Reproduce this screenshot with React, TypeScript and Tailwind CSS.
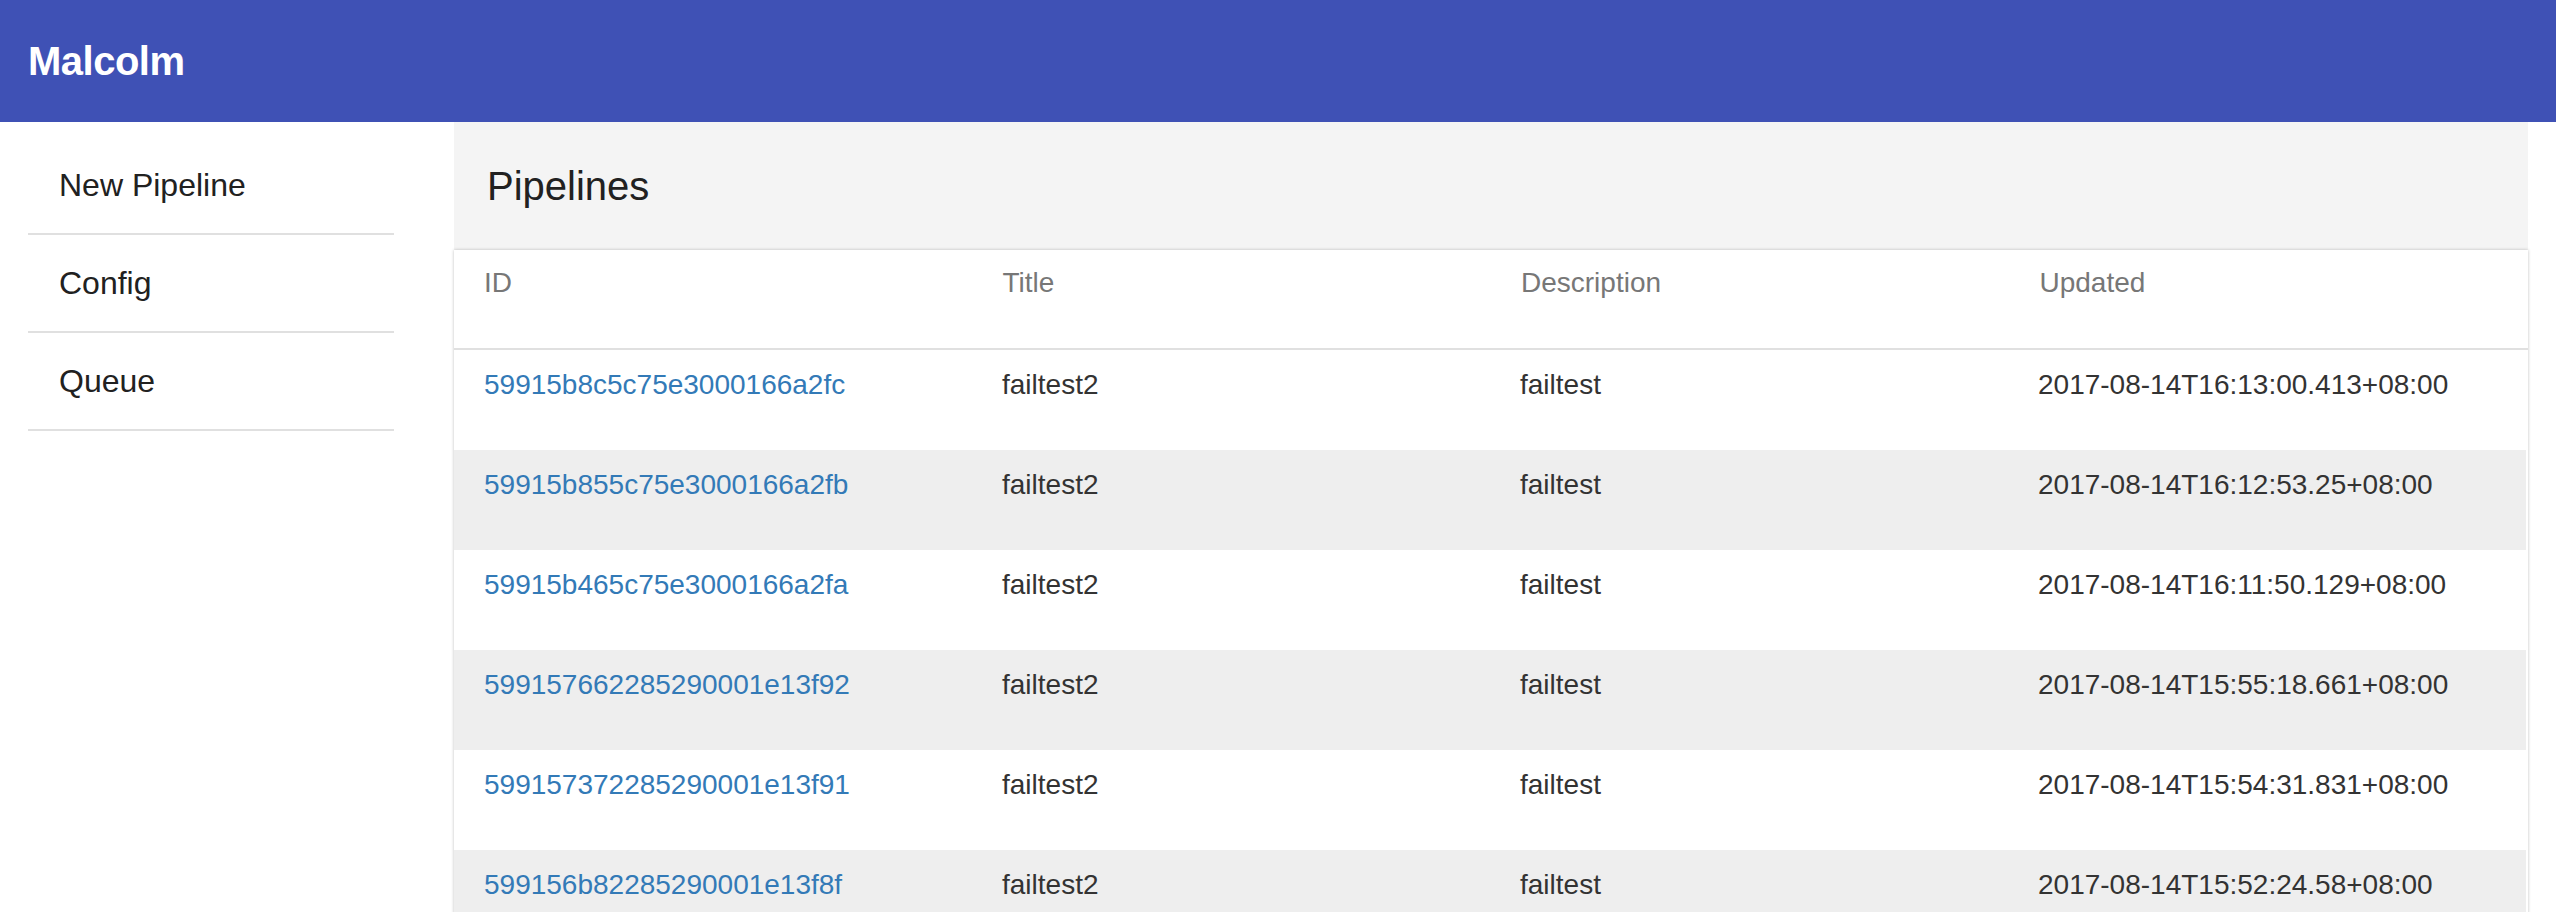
const navItems = ["New Pipeline", "Config", "Queue"];

const columns = ["ID", "Title", "Description", "Updated"];

const pipelines = [
  { id: "59915b8c5c75e3000166a2fc", title: "failtest2", description: "failtest", updated: "2017-08-14T16:13:00.413+08:00" },
  { id: "59915b855c75e3000166a2fb", title: "failtest2", description: "failtest", updated: "2017-08-14T16:12:53.25+08:00" },
  { id: "59915b465c75e3000166a2fa", title: "failtest2", description: "failtest", updated: "2017-08-14T16:11:50.129+08:00" },
  { id: "599157662285290001e13f92", title: "failtest2", description: "failtest", updated: "2017-08-14T15:55:18.661+08:00" },
  { id: "599157372285290001e13f91", title: "failtest2", description: "failtest", updated: "2017-08-14T15:54:31.831+08:00" },
  { id: "599156b82285290001e13f8f", title: "failtest2", description: "failtest", updated: "2017-08-14T15:52:24.58+08:00" },
];

export default function App() {
  return (
    <div className="flex h-[912px] flex-col overflow-hidden bg-white font-['Liberation_Sans',Arial,sans-serif]">
      <header className="flex h-[122px] shrink-0 items-center bg-[#3f51b5] pl-[28px]">
        <h1 className="text-[40px] font-bold tracking-[-0.5px] text-white">Malcolm</h1>
      </header>

      <div className="flex min-h-0 flex-1">
        <nav className="w-[454px] shrink-0 pt-[15px]">
          <ul className="ml-[28px] w-[366px]">
            {navItems.map((item) => (
              <li
                key={item}
                className="flex h-[98px] items-center border-b-2 border-[#e0e0e0] pl-[31px] text-[32px] text-[#212121]"
              >
                {item}
              </li>
            ))}
          </ul>
        </nav>

        <main className="mr-[28px] flex min-w-0 flex-1 flex-col bg-[#f4f4f4]">
          <div className="flex h-[128px] shrink-0 items-center pl-[33px]">
            <h2 className="text-[40px] text-[#212121]">Pipelines</h2>
          </div>

          <div className="flex-1 bg-white shadow-[0_0_3px_rgba(0,0,0,0.25)]">
            <div className="grid h-[100px] grid-cols-4 border-b-2 border-[#e0e0e0] text-[28px] leading-[32px] text-[#777777]">
              {columns.map((col) => (
                <div key={col} className="pl-[30px] pt-[17px]">
                  {col}
                </div>
              ))}
            </div>

            {pipelines.map((p, i) => (
              <div
                key={p.id}
                className={`mr-[2px] grid h-[100px] grid-cols-4 text-[28px] leading-[32px] text-[#333333] ${
                  i % 2 === 1 ? "bg-[#eeeeee]" : "bg-white"
                }`}
              >
                <div className="pl-[30px] pt-[19px]">
                  <a href="#" className="text-[#337ab7]">
                    {p.id}
                  </a>
                </div>
                <div className="pl-[30px] pt-[19px]">{p.title}</div>
                <div className="pl-[30px] pt-[19px]">{p.description}</div>
                <div className="pl-[30px] pt-[19px]">{p.updated}</div>
              </div>
            ))}
          </div>
        </main>
      </div>
    </div>
  );
}
